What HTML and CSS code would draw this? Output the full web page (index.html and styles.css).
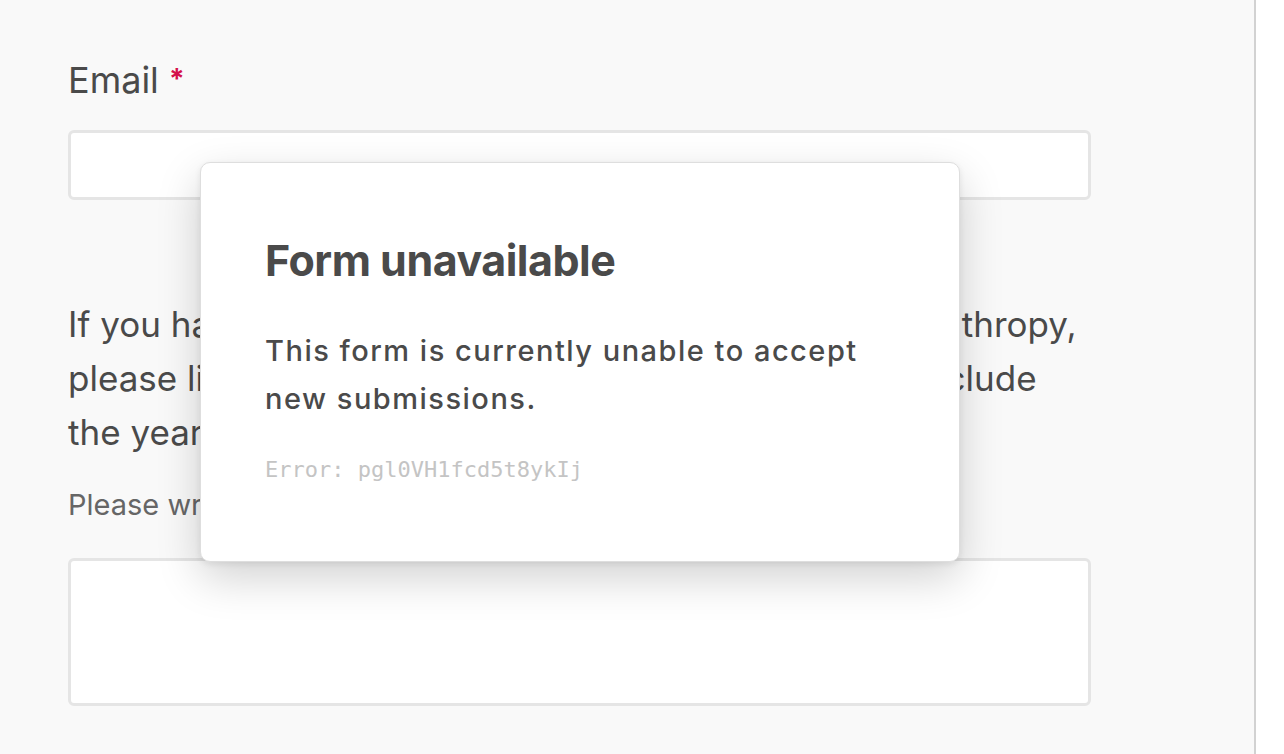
FILE: index.html
```html
<!DOCTYPE html>
<html lang="en">
<head>
<meta charset="utf-8">
<title>Form unavailable</title>
<link rel="stylesheet" href="styles.css">
</head>
<body>
  <div class="page">
    <main class="form">
      <label class="field-label" for="email">Email <span class="req">*</span></label>
      <input class="text-input" id="email" type="email">

      <p class="question">If you have previously been involved with youth philanthropy,<br>please list the organizations you have assisted and include<br>the years of your involvement.</p>
      <p class="hint">Please write a short description for each one.</p>
      <textarea class="text-area"></textarea>
    </main>
  </div>
  <div class="side"></div>

  <div class="modal" role="dialog" aria-labelledby="modal-title">
    <h2 class="modal-title" id="modal-title">Form unavailable</h2>
    <p class="modal-text">This form is currently unable to accept new submissions.</p>
    <p class="modal-error">Error: pgl0VH1fcd5t8ykIj</p>
  </div>
</body>
</html>
```

FILE: styles.css
```css
html, body {
  margin: 0;
  padding: 0;
  height: 100%;
  overflow: hidden;
}

body {
  display: flex;
  background: #ffffff;
  font-family: Inter, "Noto Sans", sans-serif;
  color: #4a4a4a;
}

.page {
  width: 1254px;
  flex: none;
  background: #f9f9f9;
  border-right: 2px solid #d2d2d2;
  box-sizing: content-box;
}

.side {
  flex: 1;
  background: #ffffff;
}

.form {
  padding: 57px 0 0 68px;
  width: 1023px;
  display: flex;
  flex-direction: column;
}

.field-label {
  font-size: 36px;
  line-height: 44px;
  color: #4a4a4a;
}

.req {
  color: #d4114a;
  font-weight: 700;
  font-size: 28px;
  vertical-align: 4px;
}

.text-input,
.text-area {
  display: block;
  box-sizing: border-box;
  width: 1023px;
  background: #ffffff;
  border: 3px solid #e5e5e5;
  border-radius: 6px;
  margin: 0;
  padding: 0;
  resize: none;
  outline: none;
}

.text-input {
  height: 70px;
  margin-top: 28px;
}

.question {
  margin: 97px 0 0;
  font-size: 35px;
  line-height: 54px;
  color: #4a4a4a;
  white-space: nowrap;
}

.hint {
  margin: 26px 0 0;
  font-size: 29px;
  line-height: 40px;
  color: #666666;
}

.text-area {
  height: 148px;
  margin-top: 33px;
}

.modal {
  position: absolute;
  left: 200px;
  top: 162px;
  width: 760px;
  height: 400px;
  box-sizing: border-box;
  padding: 0 64px;
  background: #ffffff;
  border: 1px solid #dedede;
  border-radius: 10px;
  box-shadow: 0 16px 44px rgba(0, 0, 0, 0.18), 0 2px 6px rgba(0, 0, 0, 0.08);
}

.modal-title {
  margin: 70px 0 0;
  font-size: 43px;
  line-height: 54px;
  font-weight: 700;
  color: #4a4a4a;
  letter-spacing: -0.5px;
}

.modal-text {
  margin: 40px 0 0;
  font-size: 29px;
  line-height: 48px;
  font-weight: 500;
  letter-spacing: 1.5px;
  color: #4a4a4a;
}

.modal-error {
  margin: 31px 0 0;
  font-family: "DejaVu Sans Mono", "Liberation Mono", monospace;
  font-size: 22px;
  line-height: 32px;
  color: #c4c4c4;
}
```
